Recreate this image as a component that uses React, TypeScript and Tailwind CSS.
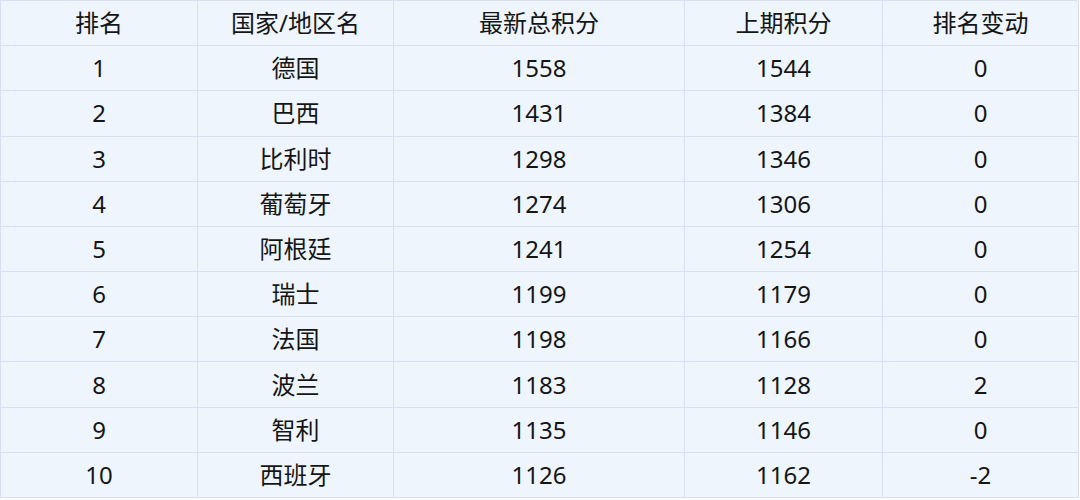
const headers = ["排名", "国家/地区名", "最新总积分", "上期积分", "排名变动"];

const rows: [string, string, string, string, string][] = [
    ["1", "德国", "1558", "1544", "0"],
    ["2", "巴西", "1431", "1384", "0"],
    ["3", "比利时", "1298", "1346", "0"],
    ["4", "葡萄牙", "1274", "1306", "0"],
    ["5", "阿根廷", "1241", "1254", "0"],
    ["6", "瑞士", "1199", "1179", "0"],
    ["7", "法国", "1198", "1166", "0"],
    ["8", "波兰", "1183", "1128", "2"],
    ["9", "智利", "1135", "1146", "0"],
    ["10", "西班牙", "1126", "1162", "-2"],
];

function Cell({ text }: { text: string }) {
    return (
        <div className="flex items-center justify-center border-r border-b border-[#d6e0f0] text-[24px] text-[#151515]">
            {text}
        </div>
    );
}

export default function App() {
    return (
        <div className="w-[1080px] h-[500px] bg-white font-['Noto_Sans','Noto_Sans_CJK_SC',sans-serif]">
            <div className="grid grid-cols-[197px_196px_291px_198px_196px] grid-rows-11 h-[498px] w-[1078px] bg-[#eef5fd] border-l border-t border-[#d6e0f0]">
                {headers.map((h) => (
                    <Cell key={h} text={h} />
                ))}
                {rows.map((r) => r.map((c, i) => <Cell key={r[0] + "-" + i} text={c} />))}
            </div>
        </div>
    );
}
